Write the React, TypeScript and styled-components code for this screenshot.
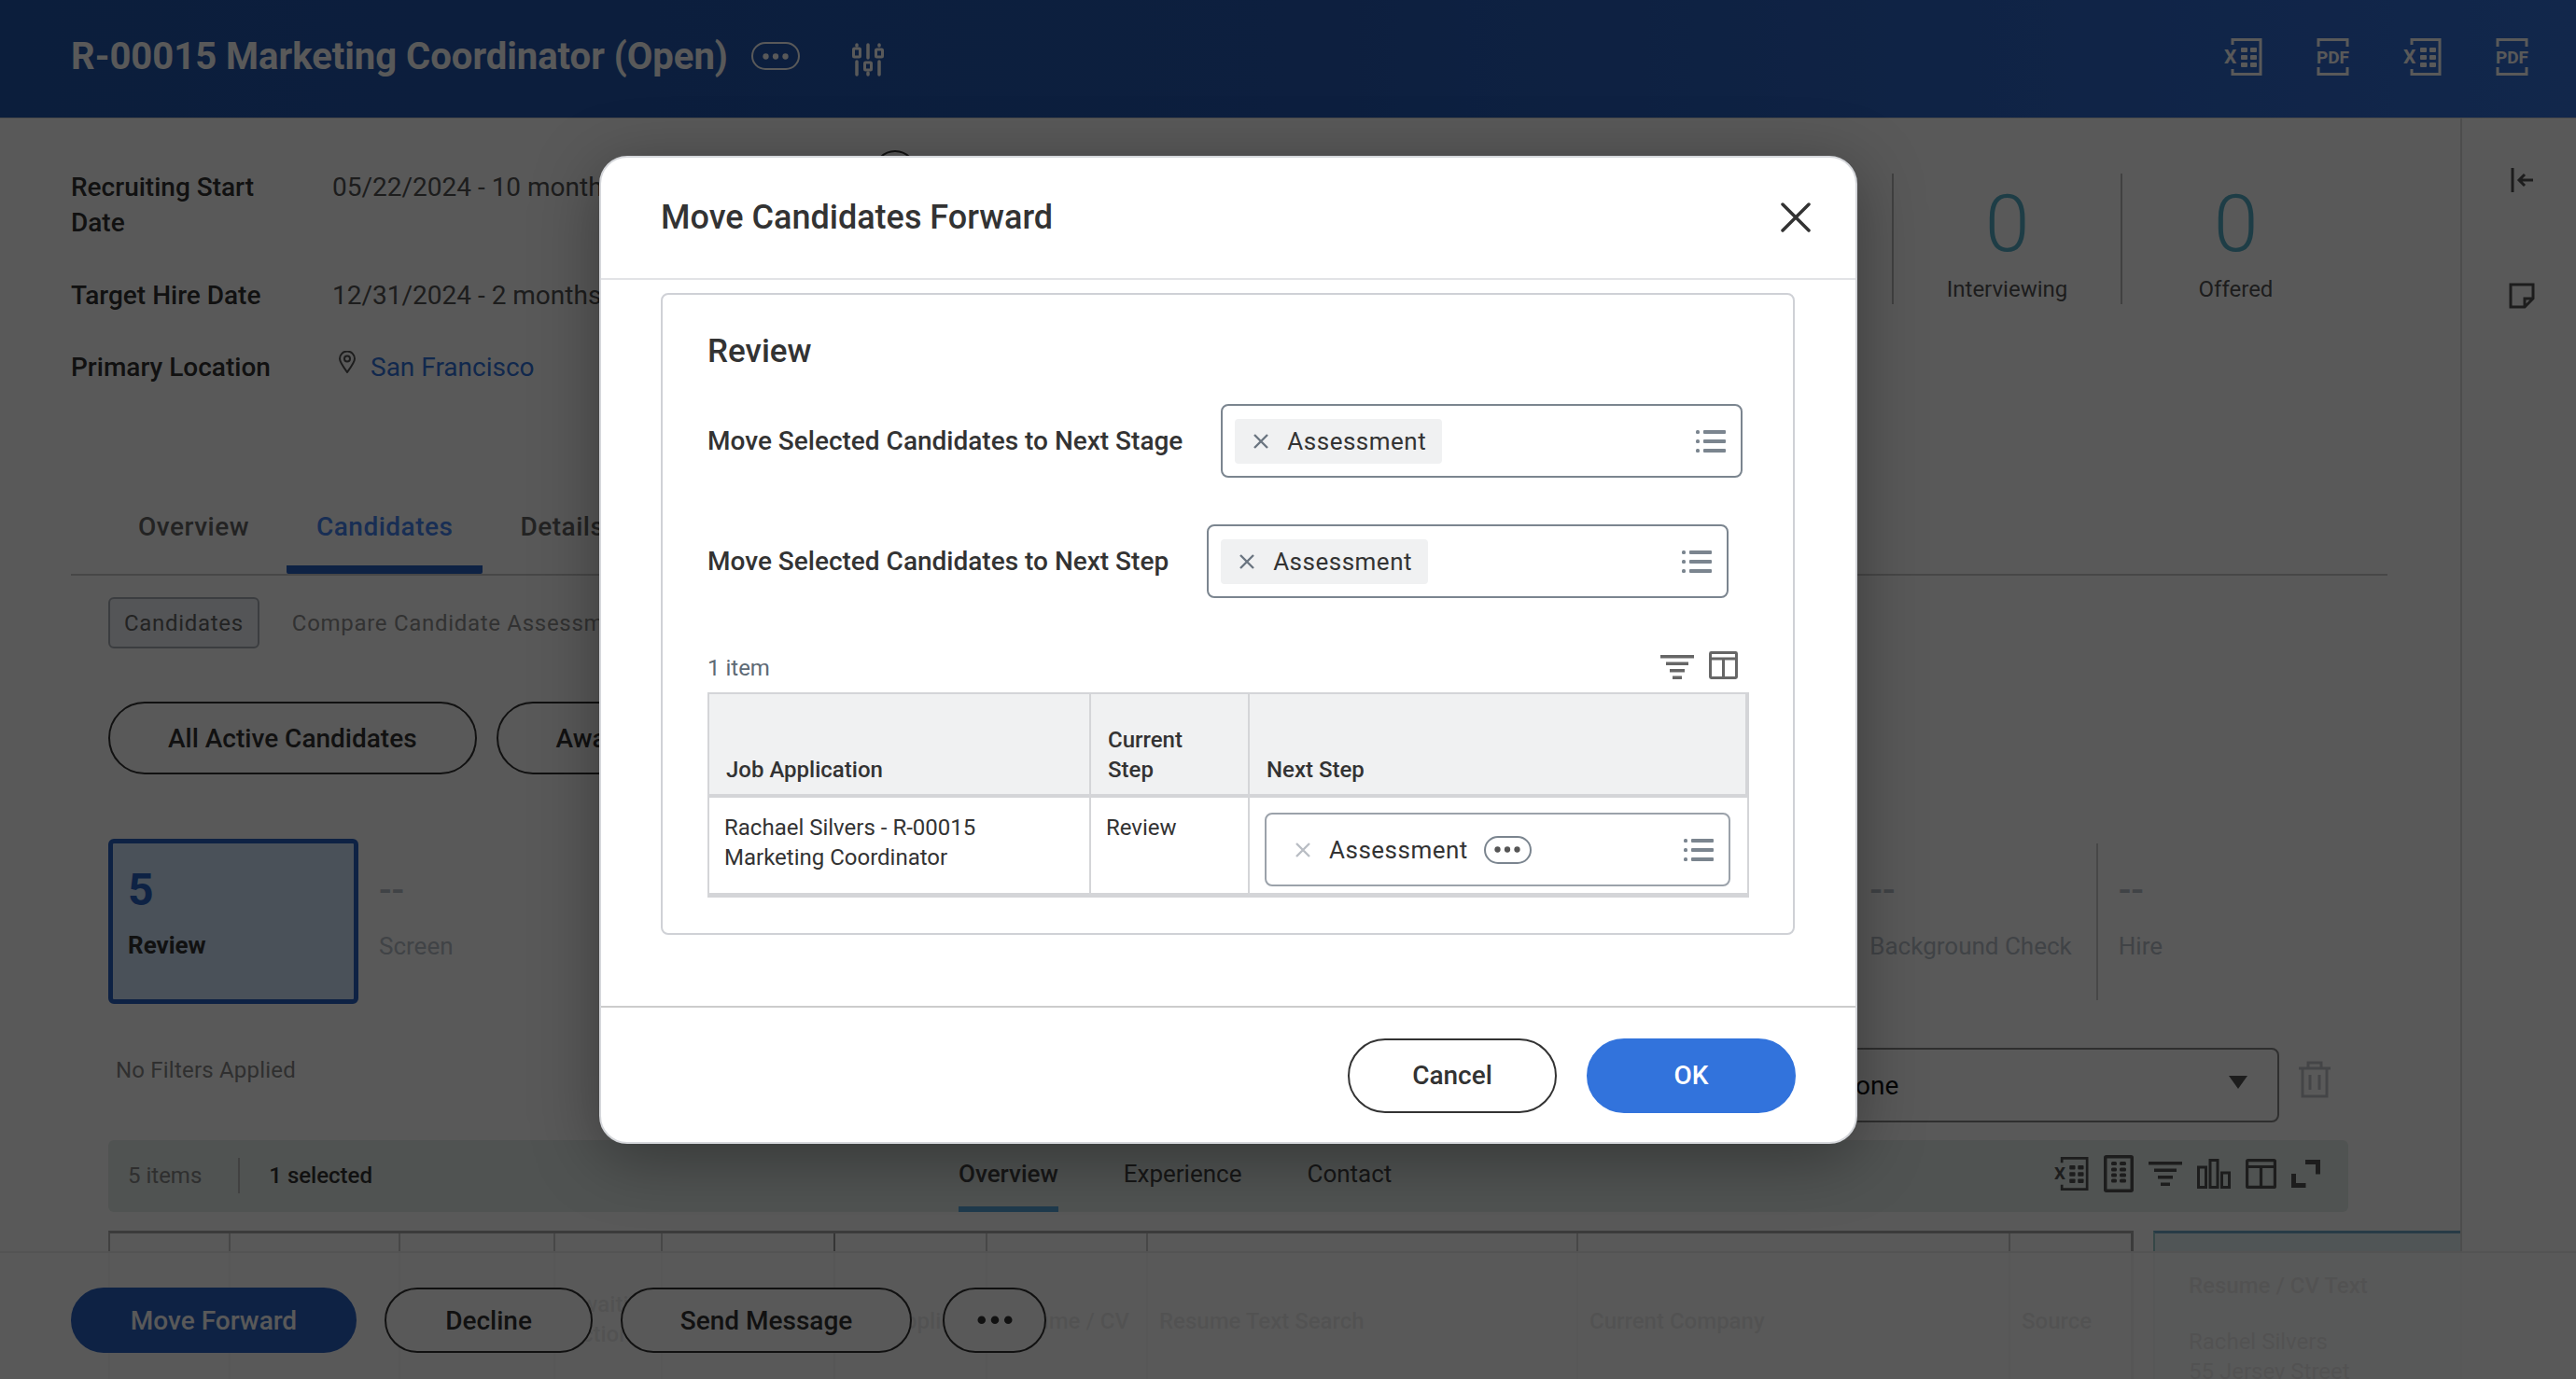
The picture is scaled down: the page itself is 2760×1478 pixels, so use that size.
import React from "react"
import styled, { createGlobalStyle } from "styled-components"

const GlobalStyle = createGlobalStyle`
  html, body {
    margin: 0;
    padding: 0;
    background: #fff;
    font-family: Roboto, "Liberation Sans", sans-serif;
    color: #333;
  }
  * { box-sizing: border-box; }
`

const Page = styled.div`
  position: relative;
  width: 2760px;
  height: 1478px;
  overflow: hidden;
  background: #fff;
`

/* ---------- top bar ---------- */
const Header = styled.header`
  height: 127px;
  display: flex;
  align-items: center;
  padding: 0 50px 6px 76px;
  color: #fff;
  background: linear-gradient(90deg, #2256ac 0%, #255ab4 50%, #3470d8 100%);
  border-bottom: 1px solid #ddd;
`
const PageTitle = styled.h1`
  margin: 2px 0 0;
  font-size: 40px;
  font-weight: 700;
  line-height: 48px;
  white-space: nowrap;
`
const HeaderMore = styled.span`
  width: 52px;
  height: 30px;
  margin-left: 25px;
  display: flex;
  align-items: center;
  justify-content: center;
  border: 2px solid currentColor;
  border-radius: 15px;
`
const HeaderActions = styled.div`
  margin: 2px 0 0 auto;
  display: flex;
  align-items: center;
  gap: 57px;
`

/* ---------- main column ---------- */
const Body = styled.div`
  display: flex;
  height: 1351px;
`
const Main = styled.main`
  width: 2636px;
  padding: 0 76px;
  overflow: hidden;
`
const Rail = styled.aside`
  flex: 1;
  display: flex;
  flex-direction: column;
  align-items: center;
  gap: 96px;
  padding: 52px 0 0 6px;
  border-left: 2px solid #ddd;
  color: #555;
`
const Summary = styled.section`
  height: 403px;
  display: flex;
  align-items: flex-start;
`
const InfoList = styled.dl`
  width: 860px;
  margin: 55px 0 0;
  display: grid;
  grid-template-columns: 280px 1fr;
  row-gap: 39.500px;
  font-size: 28px;
  line-height: 38px;
`
const InfoLabel = styled.dt`
  width: 240px;
  font-weight: 500;
`
const InfoValue = styled.dd<{ $top?: boolean }>`
  margin: 0;
  color: #555;
  white-space: nowrap;
  display: flex;
  align-items: ${({ $top }) => ($top ? "flex-start" : "center")};
`
const LinkText = styled.span`
  margin-left: 15px;
  color: #3273dc;
`
const Avatar = styled.span`
  margin: 33px 0 0 -1px;
  color: #333;
`
const Metrics = styled.div`
  margin: 59px 43px 0 auto;
  display: flex;
`
const Metric = styled.div`
  width: 245px;
  height: 140px;
  display: flex;
  flex-direction: column;
  align-items: center;
  border-left: 2px solid #bbb;
`
const MetricValue = styled.div`
  padding-top: 7px;
  font-size: 86px;
  font-weight: 300;
  line-height: 94px;
  color: #58b0c8;
`
const MetricLabel = styled.div`
  margin-top: 7px;
  font-size: 24px;
  line-height: 32px;
  color: #555;
`

const Tabs = styled.nav`
  height: 87px;
  display: flex;
  gap: 8px;
  padding-left: 40px;
  margin-right: 2px;
  border-bottom: 2px solid #ccc;
`
const Tab = styled.div<{ $active?: boolean }>`
  position: relative;
  padding: 17px 32px 0;
  font-size: 28px;
  font-weight: 500;
  line-height: 36px;
  letter-spacing: 0.5px;
  color: ${({ $active }) => ($active ? "#4583f0" : "#666")};
  border-bottom: ${({ $active }) => ($active ? "9px solid #2a62c4" : "none")};
  border-radius: 0 0 2px 2px;
`
const SubTabs = styled.div`
  margin: 23px 0 0 40px;
  height: 55px;
  display: flex;
  align-items: center;
  gap: 35px;
  font-size: 24px;
  letter-spacing: 0.7px;
  color: #8f8f8f;
  white-space: nowrap;
`
const SubTabActive = styled.span`
  height: 55px;
  padding: 0 15px;
  display: flex;
  align-items: center;
  color: #666;
  background: #f0f3f8;
  border: 2px solid #aab0b8;
  border-radius: 6px;
`
const PillRow = styled.div`
  margin: 57px 0 0 40px;
  display: flex;
  gap: 21px;
`
const Pill = styled.span`
  height: 78px;
  padding: 0 62px;
  display: flex;
  align-items: center;
  font-size: 28px;
  font-weight: 500;
  white-space: nowrap;
  border: 2px solid #333;
  border-radius: 39px;
`
const StageRow = styled.div`
  margin: 69px 217px 0 40px;
  height: 177px;
  display: flex;
  align-items: center;
`
const StageCard = styled.div`
  width: 268px;
  height: 177px;
  padding: 22px 16px;
  background: #d3e7ff;
  border: 5px solid #2a62c4;
  border-radius: 6px;
`
const StageCount = styled.div`
  font-size: 48px;
  font-weight: 700;
  line-height: 56px;
  color: #2a62c4;
`
const StageName = styled.div`
  margin-top: 14px;
  font-size: 26px;
  font-weight: 700;
  line-height: 34px;
`
const Stage = styled.div<{ $divider?: boolean; $push?: boolean }>`
  height: 168px;
  padding: 23px 26px 0 22px;
  margin-left: ${({ $push }) => ($push ? "auto" : "0")};
  font-size: 26px;
  line-height: 34px;
  color: #b8c0c9;
  border-left: ${({ $divider }) => ($divider ? "2px solid #ccc" : "none")};
`
const StageDash = styled.div`
  font-size: 40px;
  font-weight: 500;
  line-height: 56px;
  margin-bottom: 14px;
`
const FilterRow = styled.div`
  margin: 47px 62px 0 48px;
  height: 80px;
  display: flex;
  align-items: center;
`
const FilterText = styled.span`
  margin-top: -32px;
  font-size: 24px;
  letter-spacing: 0.2px;
  color: #888;
`
const SelectBox = styled.div`
  width: 496px;
  height: 80px;
  margin-left: auto;
  padding: 0 32px 0 20px;
  display: flex;
  align-items: center;
  justify-content: space-between;
  font-size: 28px;
  color: #111;
  border: 2px solid #888;
  border-radius: 8px;
`
const SelectCaret = styled.span`
  width: 0;
  height: 0;
  margin-top: -6px;
  border-left: 10px solid transparent;
  border-right: 10px solid transparent;
  border-top: 14px solid #555;
`
const TrashSlot = styled.span`
  margin: -8px 0 0 20px;
  color: #c3c6cb;
`
const ResultBar = styled.div`
  margin: 19px 44px 0 40px;
  height: 77px;
  display: grid;
  grid-template-columns: 911px auto 1fr;
  background: #e4edea;
  border-radius: 6px;
`
const ResultInfo = styled.div`
  display: flex;
  align-items: center;
  padding: 0 0 2px 21px;
  font-size: 24px;
  color: #888;
`
const ResultDivider = styled.span`
  width: 2px;
  height: 38px;
  margin: 0 31px 0 39px;
  background: #bbb;
`
const ResultSelected = styled.strong`
  font-weight: 500;
  color: #333;
`
const ResultTabs = styled.div`
  display: flex;
  gap: 70px;
`
const ResultTab = styled.span<{ $active?: boolean }>`
  padding-top: 19px;
  font-size: 26px;
  font-weight: ${({ $active }) => ($active ? 500 : 400)};
  line-height: 34px;
  color: #444;
  box-shadow: ${({ $active }) => ($active ? "inset 0 -6px 0 #5ba5dc" : "none")};
`
const ResultIcons = styled.div`
  margin-left: auto;
  padding: 0 30px 6px 0;
  display: flex;
  align-items: center;
  gap: 16px;
  color: #555;
`
const Tables = styled.div`
  margin: 20px 0 0 40px;
  display: flex;
  gap: 21px;
`
const GridTable = styled.div`
  width: 2170px;
  height: 400px;
  flex-shrink: 0;
  display: grid;
  grid-template-columns: 129px 182px 166px 115px 185px 163px 172px 461px 463px 134px;
  border-top: 3px solid #aaa;
  border-left: 2px solid #bbb;
  border-right: 3px solid #aaa;
`
const GridHead = styled.div<{ $strong?: boolean }>`
  padding: 60px 12px 0;
  font-size: 24px;
  font-weight: 500;
  line-height: 32px;
  color: #333;
  white-space: pre;
  border-right: 2px solid ${({ $strong }) => ($strong ? "#999" : "#ccc")};
  &:last-child { border-right: none; }
`
const GridHeadLabel = styled.div<{ $lines: number }>`
  margin-top: ${({ $lines }) => ($lines > 1 ? "0" : "18px")};
`
const SidePanel = styled.div`
  width: 500px;
  height: 400px;
  flex-shrink: 0;
  padding: 40px 36px;
  font-size: 24px;
  line-height: 32px;
  background: #e6f2f6;
  border-top: 3px solid #6fa8c8;
  border-left: 2px solid #9cc;
`
const SidePanelTitle = styled.div`
  font-weight: 500;
  margin-bottom: 28px;
`

/* ---------- bottom action bar ---------- */
const ActionBar = styled.footer`
  position: absolute;
  left: 0;
  right: 0;
  bottom: 0;
  height: 137px;
  padding: 37px 0 0 76px;
  display: flex;
  align-items: flex-start;
  gap: 30px;
  background: rgba(255, 255, 255, 0.9);
  border-top: 2px solid #eee;
`
const ActionButton = styled.button<{ $primary?: boolean; $w: number }>`
  width: ${({ $w }) => $w}px;
  height: 70px;
  display: flex;
  align-items: center;
  justify-content: center;
  font: 500 28px Roboto, sans-serif;
  color: ${({ $primary }) => ($primary ? "#fff" : "#333")};
  background: ${({ $primary }) => ($primary ? "#2a62c4" : "#fff")};
  border: 2px solid ${({ $primary }) => ($primary ? "#2a62c4" : "#333")};
  border-radius: 35px;
`
const MoreActionButton = styled(ActionButton)`
  margin-left: 3px;
`

/* ---------- modal ---------- */
const Overlay = styled.div`
  position: absolute;
  inset: 0;
  padding: 0 128px 85px 0;
  display: flex;
  align-items: center;
  justify-content: center;
  background: rgba(0, 0, 0, 0.65);
`
const Modal = styled.div`
  width: 1348px;
  height: 1059px;
  display: flex;
  flex-direction: column;
  background: #fff;
  border: 2px solid #d5d7db;
  border-radius: 30px;
  box-shadow: 0 14px 70px rgba(0, 0, 0, 0.35);
  overflow: hidden;
`
const ModalHeader = styled.div`
  height: 131px;
  flex-shrink: 0;
  padding: 0 48px 2px 64px;
  display: flex;
  align-items: center;
  justify-content: space-between;
  border-bottom: 2px solid #e2e3e6;
`
const ModalTitle = styled.h2`
  margin: 0;
  font-size: 36px;
  font-weight: 500;
  color: #333;
`
const ModalBody = styled.div`
  flex: 1;
  padding: 14px 65px 0 64px;
`
const Card = styled.section`
  height: 688px;
  padding: 39px 48px 0 48px;
  border: 2px solid #cfd1d6;
  border-radius: 8px;
`
const CardTitle = styled.h3`
  margin: 0 0 34px;
  font-size: 35px;
  font-weight: 500;
  line-height: 44px;
  color: #333;
`
const FieldRow = styled.div`
  display: flex;
  align-items: center;
  gap: 41px;
  margin-bottom: 50px;
`
const FieldLabel = styled.label`
  font-size: 28px;
  font-weight: 500;
  color: #333;
  white-space: nowrap;
`
const MultiInput = styled.div<{ $w: number; $soft?: boolean }>`
  width: ${({ $w }) => $w}px;
  height: 79px;
  padding: 0 16px 0 13px;
  display: flex;
  align-items: center;
  background: #fff;
  border: 2px solid ${({ $soft }) => ($soft ? "#9ba2aa" : "#7b858f")};
  border-radius: 8px;
`
const Token = styled.div`
  width: 222px;
  height: 48px;
  padding-left: 19px;
  display: flex;
  align-items: center;
  gap: 19px;
  font-size: 26px;
  letter-spacing: 0.5px;
  color: #333;
  background: #f0f1f2;
  border-radius: 4px;
`
const BareToken = styled.div`
  display: flex;
  align-items: center;
  gap: 19px;
  padding-left: 17px;
  font-size: 26px;
  letter-spacing: 0.5px;
  color: #333;
`
const TokenMore = styled.span`
  width: 51px;
  height: 30px;
  margin-left: -2px;
  display: flex;
  align-items: center;
  justify-content: center;
  color: #555;
  border: 2px solid #7b858f;
  border-radius: 15px;
`
const ListSlot = styled.span`
  margin-left: auto;
  display: flex;
  color: #7b858f;
`
const TableTools = styled.div`
  height: 44px;
  margin-top: 57px;
  display: flex;
  align-items: flex-start;
  gap: 15px;
  padding-right: 10px;
  color: #666;
`
const ItemCount = styled.span`
  margin-right: auto;
  font-size: 24px;
  line-height: 36px;
  color: #5e6a75;
`
const FilterSlot = styled.span`
  display: flex;
  margin-top: 4px;
`
const ReviewTable = styled.div`
  width: 1116px;
  display: grid;
  grid-template-columns: 409px 170px 1fr;
  border: 2px solid #d4d5d8;
  border-bottom: none;
`
const HeadCell = styled.div`
  height: 111px;
  padding: 0 18px 10px;
  display: flex;
  align-items: flex-end;
  font-size: 24px;
  font-weight: 500;
  line-height: 32px;
  color: #333;
  background: #f0f1f2;
  border-right: 2px solid #d4d5d8;
  border-bottom: 4px solid #d4d5d8;
  &:last-child { border-right: none; }
`
const BodyCell = styled.div`
  height: 107px;
  padding: 16px 16px 0;
  font-size: 24px;
  line-height: 32px;
  color: #333;
  border-right: 2px solid #d4d5d8;
  border-bottom: 5px solid #d4d5d8;
  &:last-child { border-right: none; padding: 16px 16px 0; }
`
const ModalFooter = styled.div`
  height: 146px;
  flex-shrink: 0;
  padding: 33px 64px 0 0;
  display: flex;
  justify-content: flex-end;
  gap: 32px;
  border-top: 2px solid #ccc;
`
const DialogButton = styled.button<{ $primary?: boolean }>`
  width: 224px;
  height: 80px;
  padding-bottom: 2px;
  font: 500 28px Roboto, sans-serif;
  color: ${({ $primary }) => ($primary ? "#fff" : "#333")};
  background: ${({ $primary }) => ($primary ? "#3273dc" : "#fff")};
  border: 2px solid ${({ $primary }) => ($primary ? "#3273dc" : "#333")};
  border-radius: 40px;
`

/* ---------- icons ---------- */
const Dots = ({ size = 28 }: { size?: number }) => (
  <svg width={size} height={size / 4} viewBox="0 0 40 10" fill="currentColor">
    <circle cx="5" cy="5" r="4.500" />
    <circle cx="20" cy="5" r="4.500" />
    <circle cx="35" cy="5" r="4.500" />
  </svg>
)

const ExcelIcon = ({ w = 41, h = 40 }: { w?: number; h?: number }) => (
  <svg width={w} height={h} viewBox="0 0 41 40" fill="none" stroke="currentColor">
    <path d="M9 7V1.5h30v37H9V33" strokeWidth="3" />
    <text x="0" y="27" fontFamily="Roboto" fontWeight="700" fontSize="21" fill="currentColor" stroke="none">X</text>
    <g fill="currentColor" stroke="none">
      <rect x="18" y="10" width="7" height="5" rx="1" />
      <rect x="28" y="10" width="7" height="5" rx="1" />
      <rect x="18" y="18" width="7" height="5" rx="1" />
      <rect x="28" y="18" width="7" height="5" rx="1" />
      <rect x="18" y="26" width="7" height="5" rx="1" />
      <rect x="28" y="26" width="7" height="5" rx="1" />
    </g>
  </svg>
)

const PdfIcon = () => (
  <svg width="37" height="40" viewBox="0 0 37 40" fill="none" stroke="currentColor">
    <path d="M3 9V1.5h31V9M3 31v7.500h31V31" strokeWidth="3" />
    <text x="18.5" y="27" textAnchor="middle" fontFamily="Roboto" fontWeight="700" fontSize="19" fill="currentColor" stroke="none">PDF</text>
  </svg>
)

const SliderIconSlot = styled.span`
  display: flex;
  margin: 8px 0 0 55px;
`

const SlidersIcon = () => (
  <svg width="36" height="36" viewBox="0 0 36 36" fill="none" stroke="currentColor" strokeWidth="3.500" strokeLinecap="round">
    <path d="M6 2v1M6 20v14M18 2v14M18 32v2M30 2v1M30 20v14" />
    <rect x="2.500" y="6" width="7" height="9" rx="1" strokeWidth="3" />
    <rect x="14.500" y="21" width="7" height="8" rx="1" strokeWidth="3" />
    <rect x="26.500" y="7" width="7" height="8" rx="1" strokeWidth="3" />
  </svg>
)

const PinSlot = styled.span`
  display: flex;
  margin: -12px 0 0 6px;
`

const PinIcon = () => (
  <svg width="20" height="24" viewBox="0 0 20 24" fill="none" stroke="#555" strokeWidth="2">
    <path d="M10 23C5 16 2 12 2 8.5a8 8 0 0 1 16 0C18 12 15 16 10 23Z" />
    <circle cx="10" cy="8.5" r="3" />
  </svg>
)

const AvatarIcon = () => (
  <svg width="48" height="48" viewBox="0 0 48 48" fill="none" stroke="currentColor" strokeWidth="2">
    <circle cx="24" cy="24" r="22" />
    <circle cx="24" cy="17" r="8" fill="currentColor" />
  </svg>
)

const CollapseIcon = () => (
  <svg width="24" height="28" viewBox="0 0 24 28" fill="none" stroke="currentColor" strokeWidth="3">
    <path d="M2 1v26M24 14H9M15 8l-6 6 6 6" />
  </svg>
)

const NoteIcon = () => (
  <svg width="28" height="28" viewBox="0 0 28 28" fill="none" stroke="currentColor" strokeWidth="3">
    <path d="M2 2h24v15l-9 9H2ZM26 17h-9v9" />
  </svg>
)

const TrashIcon = () => (
  <svg width="36" height="40" viewBox="0 0 36 40" fill="none" stroke="currentColor" strokeWidth="3">
    <path d="M1 8h34M11 7V2h14v5M5 8v30h26V8M13 15v16M23 15v16" />
  </svg>
)

const DocGridIcon = () => (
  <svg width="32" height="40" viewBox="0 0 32 40" fill="none" stroke="currentColor">
    <rect x="1.750" y="1.750" width="28.500" height="36.500" rx="1" strokeWidth="3.500" />
    <g fill="currentColor" stroke="none">
      <rect x="8" y="7" width="6" height="4" rx="1.500" />
      <rect x="17" y="7" width="7" height="4" rx="1.500" />
      <rect x="8" y="13.500" width="6" height="4" rx="1.500" />
      <rect x="17" y="13.500" width="7" height="4" rx="1.500" />
      <rect x="8" y="19.500" width="6" height="4" rx="1.500" />
      <rect x="17" y="19.500" width="7" height="4" rx="1.500" />
      <rect x="8" y="25.500" width="6" height="4" rx="1.500" />
      <rect x="17" y="25.500" width="7" height="4" rx="1.500" />
    </g>
  </svg>
)

const FilterIcon = ({ w = 36 }: { w?: number }) => (
  <svg width={w} height={(w * 26) / 36} viewBox="0 0 36 26" fill="currentColor">
    <rect x="0" y="0" width="36" height="3.5" />
    <rect x="6" y="7.5" width="24" height="3.5" />
    <rect x="10" y="15" width="16" height="3.5" />
    <rect x="13" y="22.5" width="10" height="3.5" />
  </svg>
)

const BarsIcon = () => (
  <svg width="36" height="32" viewBox="0 0 36 32" fill="none" stroke="currentColor" strokeWidth="3">
    <rect x="1.5" y="9" width="8" height="21.5" />
    <rect x="14" y="1.5" width="8" height="29" />
    <rect x="26.5" y="15" width="8" height="15.5" />
  </svg>
)

const ColumnsIcon = ({ w = 33, h = 32 }: { w?: number; h?: number }) => (
  <svg width={w} height={h} viewBox="0 0 33 32" fill="none" stroke="currentColor" strokeWidth="3.200">
    <rect x="1.600" y="1.600" width="29.800" height="28.800" rx="1" />
    <path d="M1.500 8.500h30M16.500 8.500v22" />
  </svg>
)

const ExpandIcon = () => (
  <svg width="31" height="30" viewBox="0 0 31 30" fill="none" stroke="currentColor" strokeWidth="5">
    <path d="M15 2.500h13.500v13M2.500 15v12.500h13" />
  </svg>
)

const CloseIcon = () => (
  <svg width="32" height="32" viewBox="0 0 32 32" fill="none" stroke="#333" strokeWidth="3.5" strokeLinecap="round">
    <path d="M2 2l28 28M30 2L2 30" />
  </svg>
)

const TokenRemove = ({ color = "#6b7580" }: { color?: string }) => (
  <svg width="18" height="18" viewBox="0 0 18 18" fill="none" stroke={color} strokeWidth="2.400">
    <path d="M2 2l14 14M16 2L2 16" />
  </svg>
)

const ListIcon = () => (
  <svg width="32" height="24" viewBox="0 0 32 24" fill="currentColor">
    <rect x="0" y="0" width="4" height="4" rx="1.500" />
    <rect x="8" y="0" width="24" height="4" rx="1" />
    <rect x="0" y="10" width="4" height="4" rx="1.500" />
    <rect x="8" y="10" width="24" height="4" rx="1" />
    <rect x="0" y="20" width="4" height="4" rx="1.500" />
    <rect x="8" y="20" width="24" height="4" rx="1" />
  </svg>
)

const gridHeads = [
  "",
  "",
  "",
  "Awaiting\nAction",
  "",
  "Job Application",
  "Resume / CV",
  "Resume Text Search",
  "Current Company",
  "Source",
]

export default function App() {
  return (
    <Page>
      <GlobalStyle />
      <Header>
        <PageTitle>R-00015 Marketing Coordinator (Open)</PageTitle>
        <HeaderMore>
          <Dots />
        </HeaderMore>
        <SliderIconSlot>
          <SlidersIcon />
        </SliderIconSlot>
        <HeaderActions>
          <ExcelIcon />
          <PdfIcon />
          <ExcelIcon />
          <PdfIcon />
        </HeaderActions>
      </Header>

      <Body>
        <Main>
          <Summary>
            <InfoList>
              <InfoLabel>Recruiting Start Date</InfoLabel>
              <InfoValue $top>05/22/2024 - 10 months ago</InfoValue>
              <InfoLabel>Target Hire Date</InfoLabel>
              <InfoValue>12/31/2024 - 2 months from now</InfoValue>
              <InfoLabel>Primary Location</InfoLabel>
              <InfoValue>
                <PinSlot>
                  <PinIcon />
                </PinSlot>
                <LinkText>San Francisco</LinkText>
              </InfoValue>
            </InfoList>
            <Avatar>
              <AvatarIcon />
            </Avatar>
            <Metrics>
              <Metric>
                <MetricValue>0</MetricValue>
                <MetricLabel>Interviewing</MetricLabel>
              </Metric>
              <Metric>
                <MetricValue>0</MetricValue>
                <MetricLabel>Offered</MetricLabel>
              </Metric>
            </Metrics>
          </Summary>

          <Tabs>
            <Tab>Overview</Tab>
            <Tab $active>Candidates</Tab>
            <Tab>Details</Tab>
          </Tabs>

          <SubTabs>
            <SubTabActive>Candidates</SubTabActive>
            <span>Compare Candidate Assessments</span>
          </SubTabs>

          <PillRow>
            <Pill>All Active Candidates</Pill>
            <Pill>Awaiting Me</Pill>
          </PillRow>

          <StageRow>
            <StageCard>
              <StageCount>5</StageCount>
              <StageName>Review</StageName>
            </StageCard>
            <Stage>
              <StageDash>--</StageDash>
              Screen
            </Stage>
            <Stage $push>
              <StageDash>--</StageDash>
              Background Check
            </Stage>
            <Stage $divider>
              <StageDash>--</StageDash>
              Hire
            </Stage>
          </StageRow>

          <FilterRow>
            <FilterText>No Filters Applied</FilterText>
            <SelectBox>
              None
              <SelectCaret />
            </SelectBox>
            <TrashSlot>
              <TrashIcon />
            </TrashSlot>
          </FilterRow>

          <ResultBar>
            <ResultInfo>
              5 items
              <ResultDivider />
              <ResultSelected>1 selected</ResultSelected>
            </ResultInfo>
            <ResultTabs>
              <ResultTab $active>Overview</ResultTab>
              <ResultTab>Experience</ResultTab>
              <ResultTab>Contact</ResultTab>
            </ResultTabs>
            <ResultIcons>
              <ExcelIcon w={37} h={36} />
              <DocGridIcon />
              <FilterIcon />
              <BarsIcon />
              <ColumnsIcon />
              <ExpandIcon />
            </ResultIcons>
          </ResultBar>

          <Tables>
            <GridTable>
              {gridHeads.map((head, i) => (
                <GridHead key={i} $strong={i === 4}>
                  <GridHeadLabel $lines={head.split("\n").length}>{head}</GridHeadLabel>
                </GridHead>
              ))}
            </GridTable>
            <SidePanel>
              <SidePanelTitle>Resume / CV Text</SidePanelTitle>
              Rachel Silvers
              <br />
              55 Jersey Street
            </SidePanel>
          </Tables>
        </Main>
        <Rail>
          <CollapseIcon />
          <NoteIcon />
        </Rail>
      </Body>

      <ActionBar>
        <ActionButton $primary $w={306}>
          Move Forward
        </ActionButton>
        <ActionButton $w={223}>Decline</ActionButton>
        <ActionButton $w={312}>Send Message</ActionButton>
        <MoreActionButton $w={111}>
          <Dots size={38} />
        </MoreActionButton>
      </ActionBar>

      <Overlay>
        <Modal>
          <ModalHeader>
            <ModalTitle>Move Candidates Forward</ModalTitle>
            <CloseIcon />
          </ModalHeader>
          <ModalBody>
            <Card>
              <CardTitle>Review</CardTitle>
              <FieldRow>
                <FieldLabel>Move Selected Candidates to Next Stage</FieldLabel>
                <MultiInput $w={559}>
                  <Token>
                    <TokenRemove />
                    Assessment
                  </Token>
                  <ListSlot>
                    <ListIcon />
                  </ListSlot>
                </MultiInput>
              </FieldRow>
              <FieldRow>
                <FieldLabel>Move Selected Candidates to Next Step</FieldLabel>
                <MultiInput $w={559}>
                  <Token>
                    <TokenRemove />
                    Assessment
                  </Token>
                  <ListSlot>
                    <ListIcon />
                  </ListSlot>
                </MultiInput>
              </FieldRow>
              <TableTools>
                <ItemCount>1 item</ItemCount>
                <FilterSlot>
                  <FilterIcon />
                </FilterSlot>
                <ColumnsIcon h={30} />
              </TableTools>
              <ReviewTable>
                <HeadCell>Job Application</HeadCell>
                <HeadCell>
                  Current
                  <br />
                  Step
                </HeadCell>
                <HeadCell>Next Step</HeadCell>
                <BodyCell>
                  Rachael Silvers - R-00015
                  <br />
                  Marketing Coordinator
                </BodyCell>
                <BodyCell>Review</BodyCell>
                <BodyCell>
                  <MultiInput $w={499} $soft>
                    <BareToken>
                      <TokenRemove color="#b9bdc4" />
                      Assessment
                      <TokenMore>
                        <Dots />
                      </TokenMore>
                    </BareToken>
                    <ListSlot>
                      <ListIcon />
                    </ListSlot>
                  </MultiInput>
                </BodyCell>
              </ReviewTable>
            </Card>
          </ModalBody>
          <ModalFooter>
            <DialogButton>Cancel</DialogButton>
            <DialogButton $primary>OK</DialogButton>
          </ModalFooter>
        </Modal>
      </Overlay>
    </Page>
  )
}
